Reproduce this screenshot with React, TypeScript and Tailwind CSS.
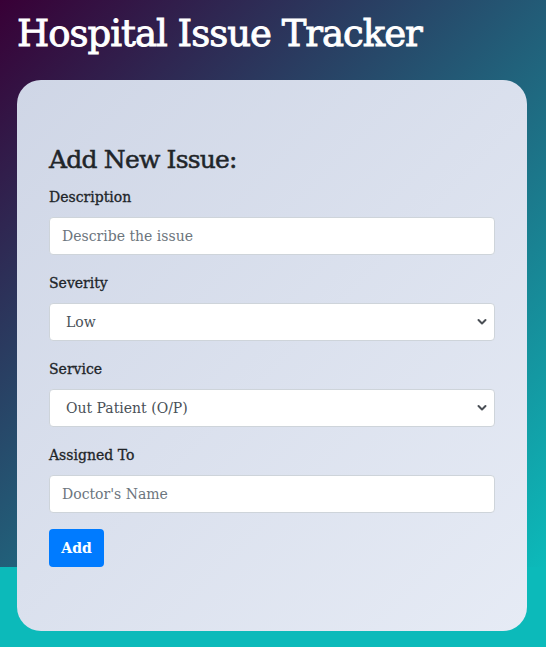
import { ChangeEvent, useState } from 'react';

const font = { fontFamily: '"DejaVu Serif", "Liberation Serif", serif' };

function Chevron() {
  return (
    <svg className="pointer-events-none absolute right-[8px] top-1/2 -translate-y-1/2 h-[8px] w-[10px] text-[#4a4f55]" viewBox="0 0 10 8" fill="none" stroke="currentColor" strokeWidth="2" strokeLinecap="round" strokeLinejoin="round">
      <path d="M1.5 2l3.5 3.5L8.5 2" />
    </svg>
  );
}

export default function App() {
  const [issue, setIssue] = useState({ description: '', severity: 'Low', service: 'Out Patient (O/P)', assigned: '' });

  const update = (key: string) => (e: ChangeEvent<HTMLInputElement | HTMLSelectElement>) =>
    setIssue({ ...issue, [key]: e.target.value });

  return (
    <div
      className="min-h-screen bg-[#0cbaba] bg-[linear-gradient(315deg,#0cbaba_0%,#380036_100%)] bg-no-repeat bg-[length:100%_567px] pt-[10px] pb-4"
      style={font}
    >
      <h1 className="ml-[17px] text-[37px] leading-[48px] text-white tracking-[-1px] [-webkit-text-stroke:0.9px_white]">Hospital Issue Tracker</h1>

      {/* Form card */}
      <div className="mt-[22px] ml-[17px] w-[510px] rounded-[24px] bg-[linear-gradient(135deg,#cfd6e6,#e6ebf5)] px-8 pt-[63px] pb-16 text-[#212529]">
        <h3 className="text-[25px] leading-[34px] mb-2 tracking-[-0.8px] [-webkit-text-stroke:0.5px_#212529]">Add New Issue:</h3>

        <div className="mb-4">
          <label className="block text-[14px] leading-6 mb-2 [-webkit-text-stroke:0.3px_#212529]">Description</label>
          <input
            value={issue.description}
            onChange={update('description')}
            placeholder="Describe the issue"
            className="block w-full h-[38px] rounded-[4px] border border-[#ced4da] bg-white px-3 text-[14px] text-[#495057] placeholder:text-[#6c757d] outline-none"
          />
        </div>

        <div className="mb-4">
          <label className="block text-[14px] leading-6 mb-2 [-webkit-text-stroke:0.3px_#212529]">Severity</label>
          <div className="relative">
            <select
              value={issue.severity}
              onChange={update('severity')}
              className="block w-full h-[38px] appearance-none rounded-[4px] border border-[#ced4da] bg-white pl-[16px] pr-8 text-[14px] text-[#495057] outline-none"
            >
              <option>Low</option>
              <option>Medium</option>
              <option>High</option>
            </select>
            <Chevron />
          </div>
        </div>

        <div className="mb-4">
          <label className="block text-[14px] leading-6 mb-2 [-webkit-text-stroke:0.3px_#212529]">Service</label>
          <div className="relative">
            <select
              value={issue.service}
              onChange={update('service')}
              className="block w-full h-[38px] appearance-none rounded-[4px] border border-[#ced4da] bg-white pl-[16px] pr-8 text-[14px] text-[#495057] outline-none"
            >
              <option>Out Patient (O/P)</option>
              <option>In Patient (I/P)</option>
              <option>Emergency</option>
            </select>
            <Chevron />
          </div>
        </div>

        <div className="mb-4">
          <label className="block text-[14px] leading-6 mb-2 [-webkit-text-stroke:0.3px_#212529]">Assigned To</label>
          <input
            value={issue.assigned}
            onChange={update('assigned')}
            placeholder="Doctor's Name"
            className="block w-full h-[38px] rounded-[4px] border border-[#ced4da] bg-white px-3 text-[14px] text-[#495057] placeholder:text-[#6c757d] outline-none"
          />
        </div>

        <button className="h-[38px] w-[55px] rounded-[4px] bg-[#007bff] text-[14px] font-bold text-white">Add</button>
      </div>
    </div>
  );
}
